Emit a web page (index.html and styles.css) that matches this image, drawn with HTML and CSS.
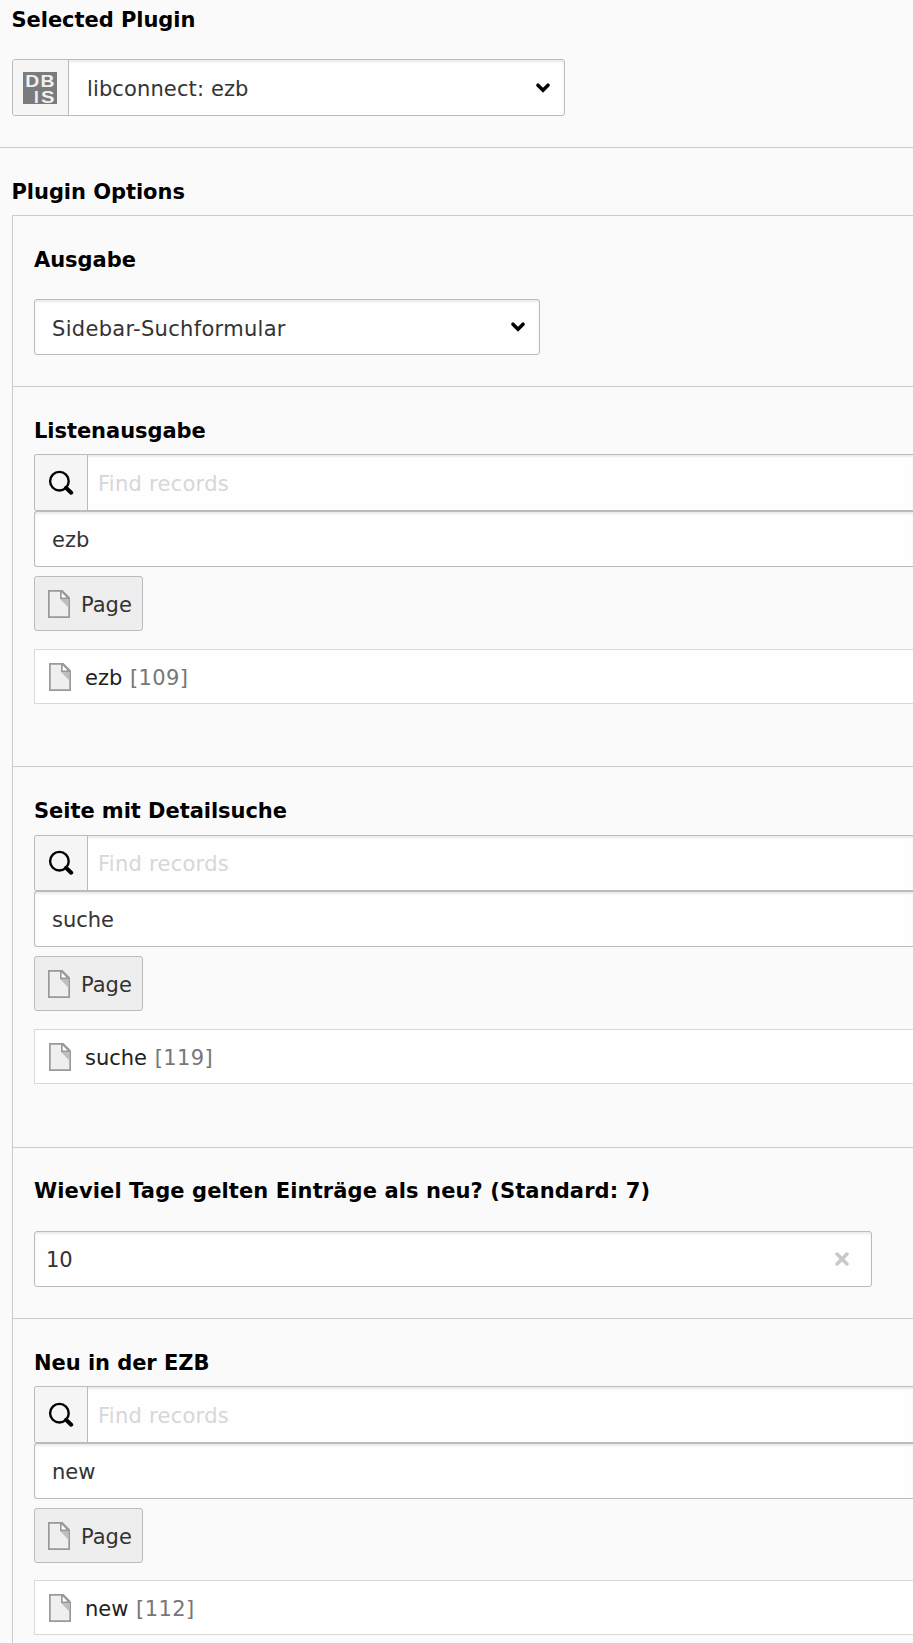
FILE: index.html
```html
<!DOCTYPE html>
<html lang="de">
<head>
<meta charset="utf-8">
<title>Plugin</title>
<link rel="stylesheet" href="styles.css">
</head>
<body>
<svg class="defs" width="0" height="0">
  <symbol id="search" viewBox="0 0 26 26"><circle cx="11.4" cy="11.2" r="9.3" fill="none" stroke="#000" stroke-width="2.4"/><path d="M18 17.8l5.200 4.900" stroke="#000" stroke-width="4" stroke-linecap="round"/></symbol>
  <symbol id="page" viewBox="0 0 22 28"><path d="M0 0h14.5L22 7.5V28H0z" fill="#999"/><path d="M1.700 1.700H12V9h8.300v17.300H1.700z" fill="#efefef"/><path d="M13.700 2.600V7.400h4.800z" fill="#fff"/><path d="M12 9h8.300v8.600z" fill="#bebebe"/></symbol>
  <symbol id="chevron" viewBox="0 0 14 10"><path d="M2 2.2l5 5 5-5" fill="none" stroke="#000" stroke-width="3.5" stroke-linecap="round"/></symbol>
</svg>
<main>
  <section class="plugin">
    <h2 class="label">Selected Plugin</h2>
    <div class="field select select-plugin">
      <span class="addon addon-logo"><svg class="logo" width="34" height="32" viewBox="0 0 34 32"><path fill="#7b7b7b" d="M0 0h34v32H0z"/><text x="2.300" y="14.500" textLength="14" lengthAdjust="spacingAndGlyphs">D</text><text x="17.500" y="14.500" textLength="14" lengthAdjust="spacingAndGlyphs">B</text><text x="11" y="30.500">I</text><text x="18" y="30.500" textLength="13.500" lengthAdjust="spacingAndGlyphs">S</text></svg></span>
      <span class="value">libconnect: ezb</span>
      <svg class="chevron" width="14" height="10"><use href="#chevron"/></svg>
    </div>
  </section>
  <section class="options">
    <h2 class="label">Plugin Options</h2>
    <div class="panel">
      <section class="item item-select">
        <h3 class="label">Ausgabe</h3>
        <div class="field select"><span class="value value-wide">Sidebar-Suchformular</span><svg class="chevron" width="14" height="10"><use href="#chevron"/></svg></div>
      </section>
      <section class="item item-liste">
        <h3 class="label">Listenausgabe</h3>
        <div class="field finder"><span class="addon"><svg width="26" height="26"><use href="#search"/></svg></span><span class="placeholder">Find records</span></div>
        <div class="field entry"><span class="value">ezb</span></div>
        <button class="page-button" type="button"><svg width="22" height="28"><use href="#page"/></svg><span>Page</span></button>
        <div class="record"><svg width="22" height="28"><use href="#page"/></svg><span>ezb <span class="uid">[109]</span></span></div>
      </section>
      <section class="item item-suche">
        <h3 class="label">Seite mit Detailsuche</h3>
        <div class="field finder"><span class="addon"><svg width="26" height="26"><use href="#search"/></svg></span><span class="placeholder">Find records</span></div>
        <div class="field entry"><span class="value">suche</span></div>
        <button class="page-button" type="button"><svg width="22" height="28"><use href="#page"/></svg><span>Page</span></button>
        <div class="record"><svg width="22" height="28"><use href="#page"/></svg><span>suche <span class="uid">[119]</span></span></div>
      </section>
      <section class="item item-days">
        <h3 class="label">Wieviel Tage gelten Einträge als neu? (Standard: 7)</h3>
        <div class="field days"><span class="value">10</span><svg width="14" height="14" viewBox="0 0 14 14"><path d="M2 2l10 10M12 2L2 12" stroke="#c8c8c8" stroke-width="3.4" stroke-linecap="round"/></svg></div>
      </section>
      <section class="item item-neu">
        <h3 class="label">Neu in der EZB</h3>
        <div class="field finder"><span class="addon"><svg width="26" height="26"><use href="#search"/></svg></span><span class="placeholder">Find records</span></div>
        <div class="field entry"><span class="value">new</span></div>
        <button class="page-button" type="button"><svg width="22" height="28"><use href="#page"/></svg><span>Page</span></button>
        <div class="record"><svg width="22" height="28"><use href="#page"/></svg><span>new <span class="uid">[112]</span></span></div>
      </section>
    </div>
  </section>
</main>
</body>
</html>
```
FILE: styles.css
```css
* { box-sizing: border-box; }
body {
  margin: 0;
  height: 1643px;
  overflow: hidden;
  background: #fafafa;
  color: #333;
  font: 21px/30px Verdana, "DejaVu Sans", sans-serif;
}
svg { display: block; flex: none; }
.defs { position: absolute; }
.logo text { font: bold 17px "Liberation Sans", sans-serif; fill: #f0f0f0; }
.label { margin: 0; height: 30px; font-size: 21px; font-weight: 700; letter-spacing: -.05px; color: #000; white-space: nowrap; }
.plugin .label, .options > .label { margin-left: -.5px; }
.plugin { height: 148px; padding: 5px 0 0 12px; border-bottom: 1px solid #ccc; }
.options { padding: 29px 0 0 12px; }
.panel { height: 1440px; margin-top: 8px; border: 1px solid #ccc; border-width: 1px 0 0 1px; }
.item { padding: 29px 0 0 21px; border-bottom: 1px solid #ccc; }
.item-select { height: 171px; }
.item-liste { height: 380px; }
.item-suche { height: 381px; }
.item-days { height: 171px; }
.item-neu { border-bottom: 0; }

.field {
  display: flex;
  align-items: center;
  height: 57px;
  background: #fefefe;
  border: 1px solid #bbb;
  border-radius: 3px;
  box-shadow: inset 0 2px 2px rgba(0, 0, 0, .075);
}
.select { width: 506px; height: 56px; margin-top: 24px; padding: 0 14px 0 17px; justify-content: space-between; }
.select-plugin { width: 553px; height: 57px; padding-left: 0; }
.select-plugin .value { flex: 1; padding-left: 18px; letter-spacing: .12px; }
.select .value, .days .value { padding-top: 2px; }
.select .value-wide { padding-top: 3px; letter-spacing: .31px; }
.addon {
  display: flex;
  align-items: center;
  align-self: stretch;
  width: 53px;
  padding-left: 13px;
  background: #f5f5f5;
  border-right: 1px solid #bbb;
  border-radius: 2px 0 0 2px;
}
.addon-logo { width: 56px; padding-left: 10px; }
.finder { margin-top: 8px; border-right: 0; border-radius: 3px 0 0 3px; }
.placeholder { padding: 2px 0 0 10px; letter-spacing: .27px; color: #d7d7d7; }
.entry { height: 56px; padding: 2px 0 0 17px; border-right: 0; border-radius: 3px 0 0 3px; }
.item-suche .finder { margin-top: 9px; height: 56px; }
.item-suche .placeholder { padding-top: 1px; }
.item-days .label { margin-top: -1px; margin-bottom: 1px; letter-spacing: .11px; }
.page-button {
  display: flex;
  align-items: center;
  gap: 11px;
  width: 109px;
  height: 55px;
  margin: 9px 0 0;
  padding: 0 0 0 13px;
  font: inherit;
  color: #333;
  background: #eee;
  border: 1px solid #bbb;
  border-radius: 3px;
}
.page-button > span, .record > span { padding-top: 2px; }
.record {
  display: flex;
  align-items: center;
  gap: 14px;
  height: 55px;
  margin-top: 18px;
  padding-left: 14px;
  color: #212121;
  background: #fff;
  border: 1px solid #d9d9d9;
  border-right: 0;
}
.item-neu .record { margin-top: 17px; }
.uid { padding-left: 1px; letter-spacing: .4px; color: #777; }
.days { width: 838px; height: 56px; margin-top: 25px; padding: 0 22px 0 11px; justify-content: space-between; }
```
